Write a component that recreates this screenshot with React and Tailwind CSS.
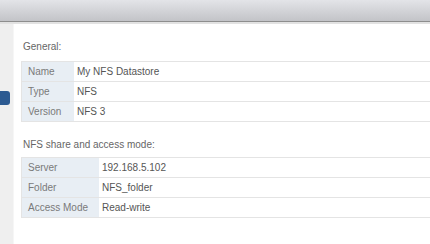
import React from "react";

const general = [
  ["Name", "My NFS Datastore"],
  ["Type", "NFS"],
  ["Version", "NFS 3"],
];

const share = [
  ["Server", "192.168.5.102"],
  ["Folder", "NFS_folder"],
  ["Access Mode", "Read-write"],
];

const InfoTable = ({ rows, labelWidth }) => (
  <div className="border-t border-l border-[#e4e4e4]">
    {rows.map(([label, value]) => (
      <div key={label} className="flex h-[20px] border-b border-[#e4e4e4]">
        <div
          className={`${labelWidth} shrink-0 bg-[#e8eef4] pl-[6px] flex items-center text-[#7a7a7a]`}
        >
          {label}
        </div>
        <div className="flex-1 pl-[3px] flex items-center text-[#555]">{value}</div>
      </div>
    ))}
  </div>
);

const App = () => {
  return (
    <div className="w-[430px] h-[244px] overflow-hidden bg-white text-[10px] leading-[14px] font-['Liberation_Sans',Arial,sans-serif]">
      <div className="h-[22px] bg-gradient-to-b from-[#e3e4e8] to-[#c3c4c8] border-b border-[#8e8e8e]"></div>
      <div className="h-[2px] bg-[#e2e2e2]"></div>
      <div className="flex h-[220px]">
        <div className="w-[14px] shrink-0 bg-[#efefef] border-r border-[#f6f6f6]">
          <div className="mt-[67px] w-[10px] h-[14px] rounded-r-[3px] bg-[#2c5a91]"></div>
        </div>
        <div className="flex-1 pl-[7px]">
          <div className="pt-[16px] pl-[2px] text-[#666]">General:</div>
          <div className="mt-[7px]">
            <InfoTable rows={general} labelWidth="w-[52px]" />
          </div>
          <div className="mt-[16px] pl-[2px] text-[#666]">NFS share and access mode:</div>
          <div className="mt-[5px]">
            <InfoTable rows={share} labelWidth="w-[77px]" />
          </div>
        </div>
      </div>
    </div>
  );
};

export default App;
